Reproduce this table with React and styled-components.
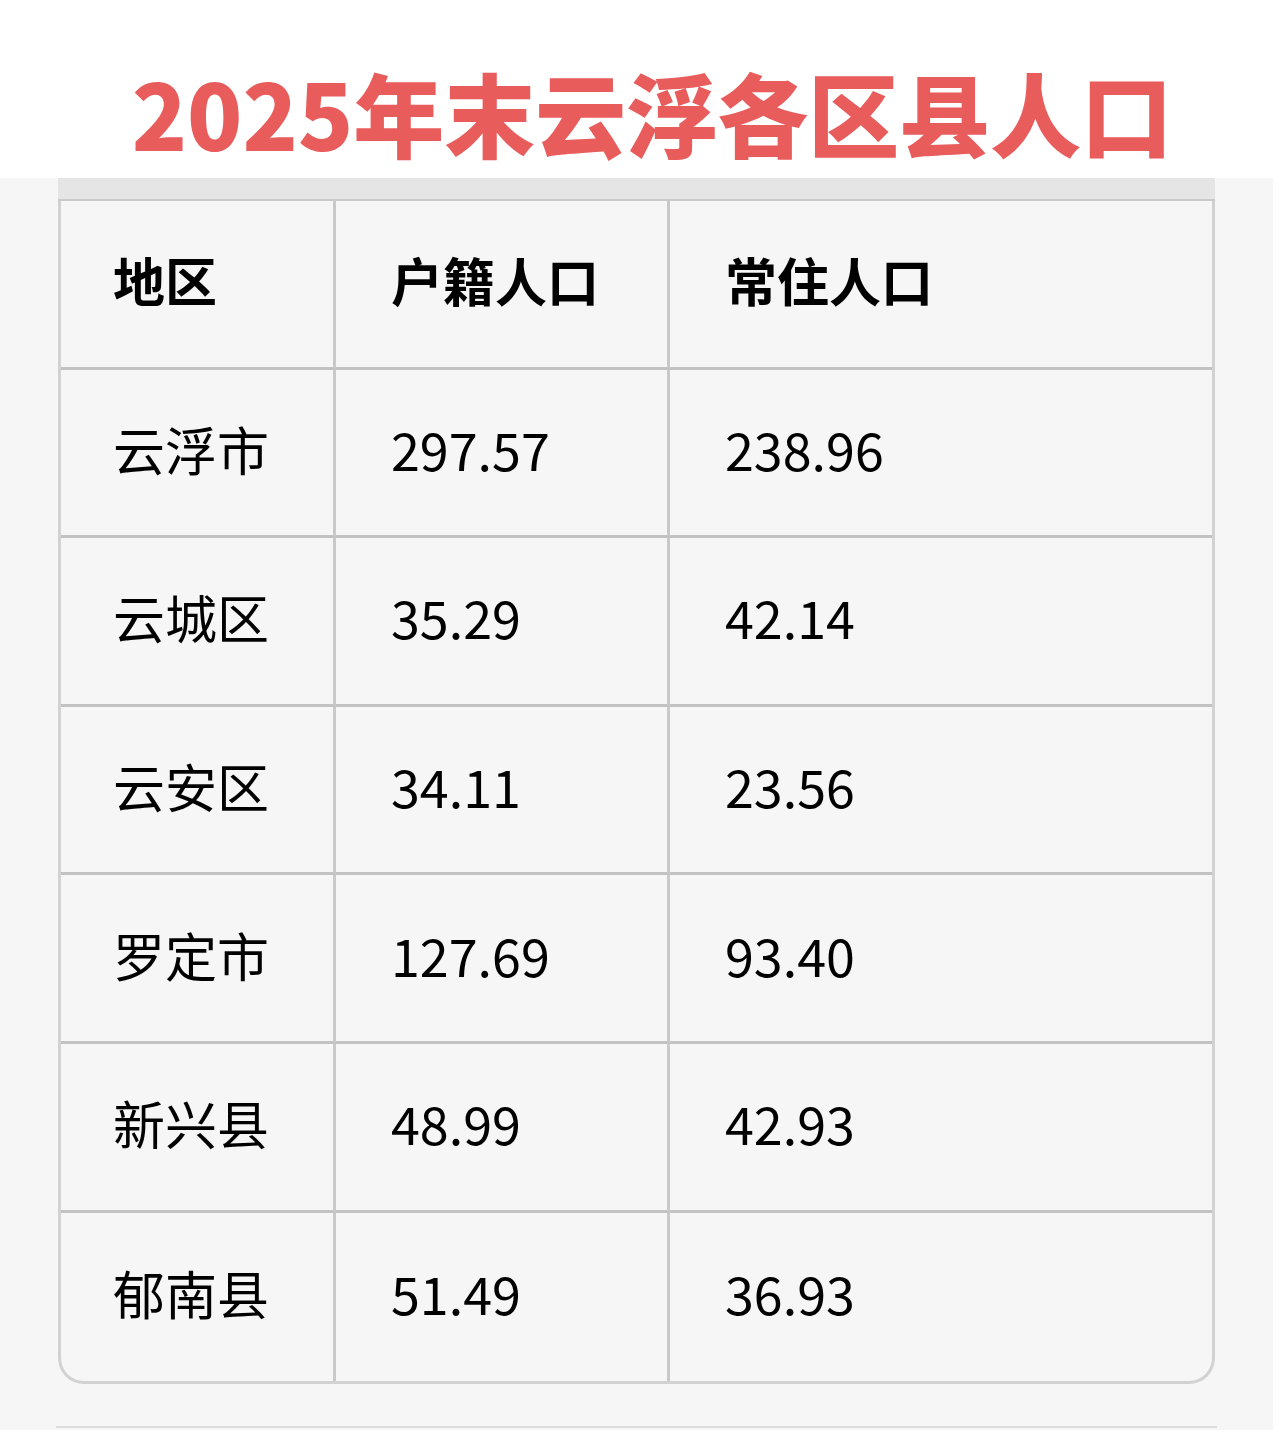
import React from 'react'
import styled, { createGlobalStyle } from 'styled-components'

const GlobalStyle = createGlobalStyle`
  body {
    margin: 0;
    background: #ffffff;
    font-family: "Noto Sans CJK SC", "Noto Sans", sans-serif;
  }
`

const Page = styled.div`
  width: 1280px;
  min-height: 1448px;
  background: #ffffff;
`
const TitleBar = styled.header`
  display: flex;
  justify-content: center;
  align-items: center;
  height: 178px;
  padding-left: 24px;
  box-sizing: border-box;
`
const Title = styled.h1`
  margin: 0;
  padding-top: 44px;
  font-size: 91px;
  line-height: 1;
  font-weight: 900;
  color: #e95c5c;
  letter-spacing: 0;
  white-space: nowrap;
`
const Panel = styled.section`
  width: 1273px;
  padding: 0 58px;
  box-sizing: border-box;
  background: #f6f6f6;
`
const Band = styled.div`
  height: 23px;
  background: #e5e5e5;
  border-bottom: 2px solid #cacaca;
  box-sizing: border-box;
`
const Table = styled.div`
  display: grid;
  grid-template-columns: 275px 334px 1fr;
  border: 3px solid #d2d2d2;
  border-top: none;
  border-radius: 0 0 26px 26px;
  overflow: hidden;
  background: #f6f6f6;
`
const Cell = styled.div`
  display: flex;
  align-items: center;
  height: 168.6px;
  box-sizing: border-box;
  padding-left: ${p => (p.$first ? '52px' : '55px')};
  padding-bottom: 8px;
  border-right: ${p => (p.$lastCol ? 'none' : '3px solid #c9c9c9')};
  border-bottom: ${p => (p.$lastRow ? 'none' : '3px solid #c2c2c2')};
  font-size: 52px;
  font-weight: ${p => (p.$head ? 700 : 400)};
  color: #000000;
  white-space: nowrap;
`
const Footer = styled.div`
  height: 44px;
  display: flex;
  align-items: flex-end;
  margin: 0 -2px;
  padding-bottom: 2px;
`
const Rule = styled.div`
  flex: 1;
  height: 2px;
  background: #dcdcdc;
`

const head = ['地区', '户籍人口', '常住人口']
const rows = [
  ['云浮市', '297.57', '238.96'],
  ['云城区', '35.29', '42.14'],
  ['云安区', '34.11', '23.56'],
  ['罗定市', '127.69', '93.40'],
  ['新兴县', '48.99', '42.93'],
  ['郁南县', '51.49', '36.93'],
]

export default function App() {
  const all = [head, ...rows]
  return (
    <Page>
      <GlobalStyle />
      <TitleBar>
        <Title>2025年末云浮各区县人口</Title>
      </TitleBar>
      <Panel>
        <Band />
        <Table>
          {all.map((row, r) =>
            row.map((text, c) => (
              <Cell
                key={`${r}-${c}`}
                $head={r === 0}
                $first={c === 0}
                $lastCol={c === row.length - 1}
                $lastRow={r === all.length - 1}
              >
                {text}
              </Cell>
            ))
          )}
        </Table>
        <Footer>
          <Rule />
        </Footer>
      </Panel>
    </Page>
  )
}
